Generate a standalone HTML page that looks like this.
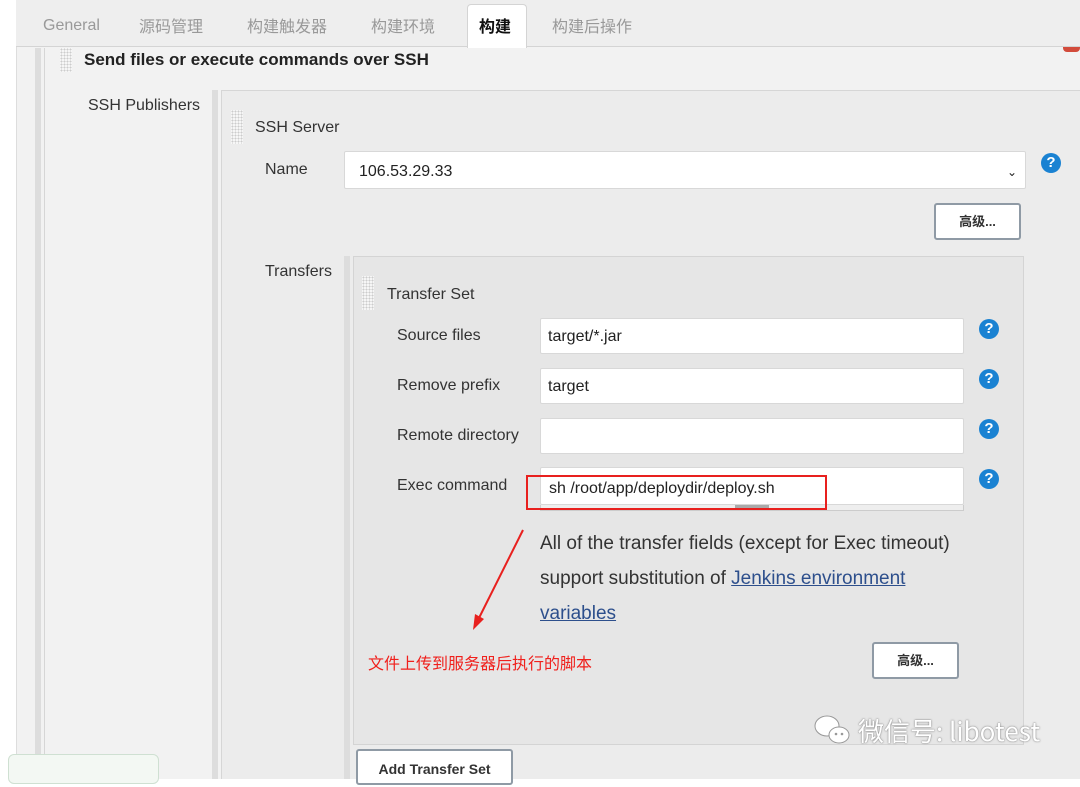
<!DOCTYPE html>
<html><head><meta charset="utf-8"><style>
*{box-sizing:border-box;margin:0;padding:0}
body{width:1080px;height:779px;overflow:hidden;background:#fff;font-family:"Liberation Sans","Noto Sans CJK SC",sans-serif;color:#333;position:relative}
.a{position:absolute}
.lbl{font-size:16px;color:#333}
.tab{position:absolute;top:14px;font-size:16px;line-height:22px;color:#999;font-family:"Noto Sans CJK SC",sans-serif}
.inp{position:absolute;background:#fff;border:1px solid #d8d8d8;border-radius:2px;font-size:16px;color:#222;padding-left:7px;line-height:36px}
.q{position:absolute;width:20px;height:20px;border-radius:50%;background:#1a82d2;color:#fff;font-weight:bold;font-size:15px;text-align:center;line-height:20px}
.btn{position:absolute;background:#fff;border:2px solid #8f9aa5;border-radius:3px;font-size:13px;font-weight:bold;color:#333;text-align:center}
.grip{position:absolute;width:12px;background-image:radial-gradient(#ccc 0.8px,transparent 0.9px);background-size:3px 3px;background-color:#f6f6f6}
</style></head><body>
<div class="a" style="left:16px;top:0;width:1064px;height:779px;background:#f2f2f2;border-left:1px solid #ddd"></div>
<div class="a" style="left:16px;top:0;width:1064px;height:47px;background:#eee;border-bottom:1px solid #d4d4d4"></div>
<div class="a" style="left:467px;top:4px;width:60px;height:44px;background:#fff;border:1px solid #d4d4d4;border-bottom:none;border-radius:4px 4px 0 0"></div>
<div class="tab" style="left:43px;font-family:'Liberation Sans',sans-serif;top:15px">General</div>
<div class="tab" style="left:139px">源码管理</div>
<div class="tab" style="left:247px">构建触发器</div>
<div class="tab" style="left:371px">构建环境</div>
<div class="tab" style="left:479px;color:#111;font-weight:bold">构建</div>
<div class="tab" style="left:552px">构建后操作</div>
<div class="a" style="left:1063px;top:47px;width:17px;height:5px;background:#d24b3b;border-radius:0 0 4px 4px"></div>
<div class="a" style="left:35px;top:48px;width:6px;height:731px;background:#ddd"></div>
<div class="a" style="left:44px;top:48px;width:1px;height:731px;background:#d6d6d6"></div>
<div class="grip" style="left:60px;top:48px;height:24px"></div>
<div class="a" style="left:84px;top:50px;font-size:17px;font-weight:bold;color:#222">Send files or execute commands over SSH</div>
<div class="a lbl" style="left:88px;top:97px">SSH Publishers</div>
<div class="a" style="left:212px;top:90px;width:6px;height:689px;background:#ddd"></div>
<div class="a" style="left:221px;top:90px;width:859px;height:689px;background:#ececec;border-left:1px solid #d6d6d6;border-top:1px solid #d6d6d6"></div>
<div class="grip" style="left:231px;top:110px;height:34px"></div>
<div class="a lbl" style="left:255px;top:119px">SSH Server</div>
<div class="a lbl" style="left:265px;top:161px">Name</div>
<div class="inp" style="left:344px;top:151px;width:682px;height:38px;line-height:40px;padding-left:14px">106.53.29.33<span style="position:absolute;right:8px;top:0;font-size:12px">&#8964;</span></div>
<div class="q" style="left:1041px;top:153px">?</div>
<div class="btn" style="left:934px;top:203px;width:87px;height:37px;line-height:33px">高级...</div>
<div class="a lbl" style="left:265px;top:263px">Transfers</div>
<div class="a" style="left:344px;top:256px;width:6px;height:523px;background:#ddd"></div>
<div class="a" style="left:353px;top:256px;width:671px;height:489px;background:#e6e6e6;border:1px solid #d4d4d4"></div>
<div class="grip" style="left:362px;top:276px;height:34px"></div>
<div class="a lbl" style="left:387px;top:286px">Transfer Set</div>
<div class="a lbl" style="left:397px;top:327px">Source files</div>
<div class="inp" style="left:540px;top:318px;width:424px;height:36px">target/*.jar</div>
<div class="q" style="left:979px;top:319px">?</div>
<div class="a lbl" style="left:397px;top:377px">Remove prefix</div>
<div class="inp" style="left:540px;top:368px;width:424px;height:36px">target</div>
<div class="q" style="left:979px;top:369px">?</div>
<div class="a lbl" style="left:397px;top:427px">Remote directory</div>
<div class="inp" style="left:540px;top:418px;width:424px;height:36px"></div>
<div class="q" style="left:979px;top:419px">?</div>
<div class="a lbl" style="left:397px;top:477px">Exec command</div>
<div class="inp" style="left:540px;top:467px;width:424px;height:38px;padding-left:8px;line-height:42px">sh /root/app/deploydir/deploy.sh</div>
<div class="a" style="left:540px;top:505px;width:424px;height:6px;border:1px solid #ccc;border-top:none;background:#eee"></div>
<div class="a" style="left:735px;top:505px;width:34px;height:3px;background:#aaa"></div>
<div class="q" style="left:979px;top:469px">?</div>
<div class="a" style="left:526px;top:475px;width:301px;height:35px;border:2px solid #e8201e"></div>
<div class="a" style="left:540px;top:526px;font-size:19px;line-height:35px;color:#333;width:460px">All of the transfer fields (except for Exec timeout)<br>support substitution of <span style="color:#2d4f8c;text-decoration:underline">Jenkins environment</span><br><span style="color:#2d4f8c;text-decoration:underline">variables</span></div>
<svg class="a" style="left:470px;top:528px" width="60" height="104"><line x1="53" y1="2" x2="8" y2="92" stroke="#e8201e" stroke-width="2"/><polygon points="3,102 5,86 14,91" fill="#e8201e"/></svg>
<div class="a" style="left:368px;top:650px;font-size:16px;color:#f0201c;font-family:'Noto Sans CJK SC',sans-serif">文件上传到服务器后执行的脚本</div>
<div class="btn" style="left:872px;top:642px;width:87px;height:37px;line-height:33px">高级...</div>
<svg class="a" style="left:812px;top:712px" width="42" height="36"><ellipse cx="15" cy="14" rx="12" ry="10" fill="#fff" stroke="#999" stroke-width="1"/><ellipse cx="27" cy="23" rx="10" ry="8" fill="#fff" stroke="#999" stroke-width="1"/><circle cx="24" cy="22" r="1.3" fill="#999"/><circle cx="30" cy="22" r="1.3" fill="#999"/></svg>
<div class="a" style="left:858px;top:714px;font-size:26px;color:#fff;font-family:'Noto Sans CJK SC',sans-serif;line-height:34px;text-shadow:0 0 1px #777,0 0 2px #999">微信号: libotest</div>
<div class="btn" style="left:356px;top:749px;width:157px;height:36px;line-height:36px;font-size:14px">Add Transfer Set</div>
<div class="a" style="left:8px;top:754px;width:151px;height:30px;background:#f3f8f3;border:1px solid #cfe0d2;border-radius:6px"></div>
</body></html>
